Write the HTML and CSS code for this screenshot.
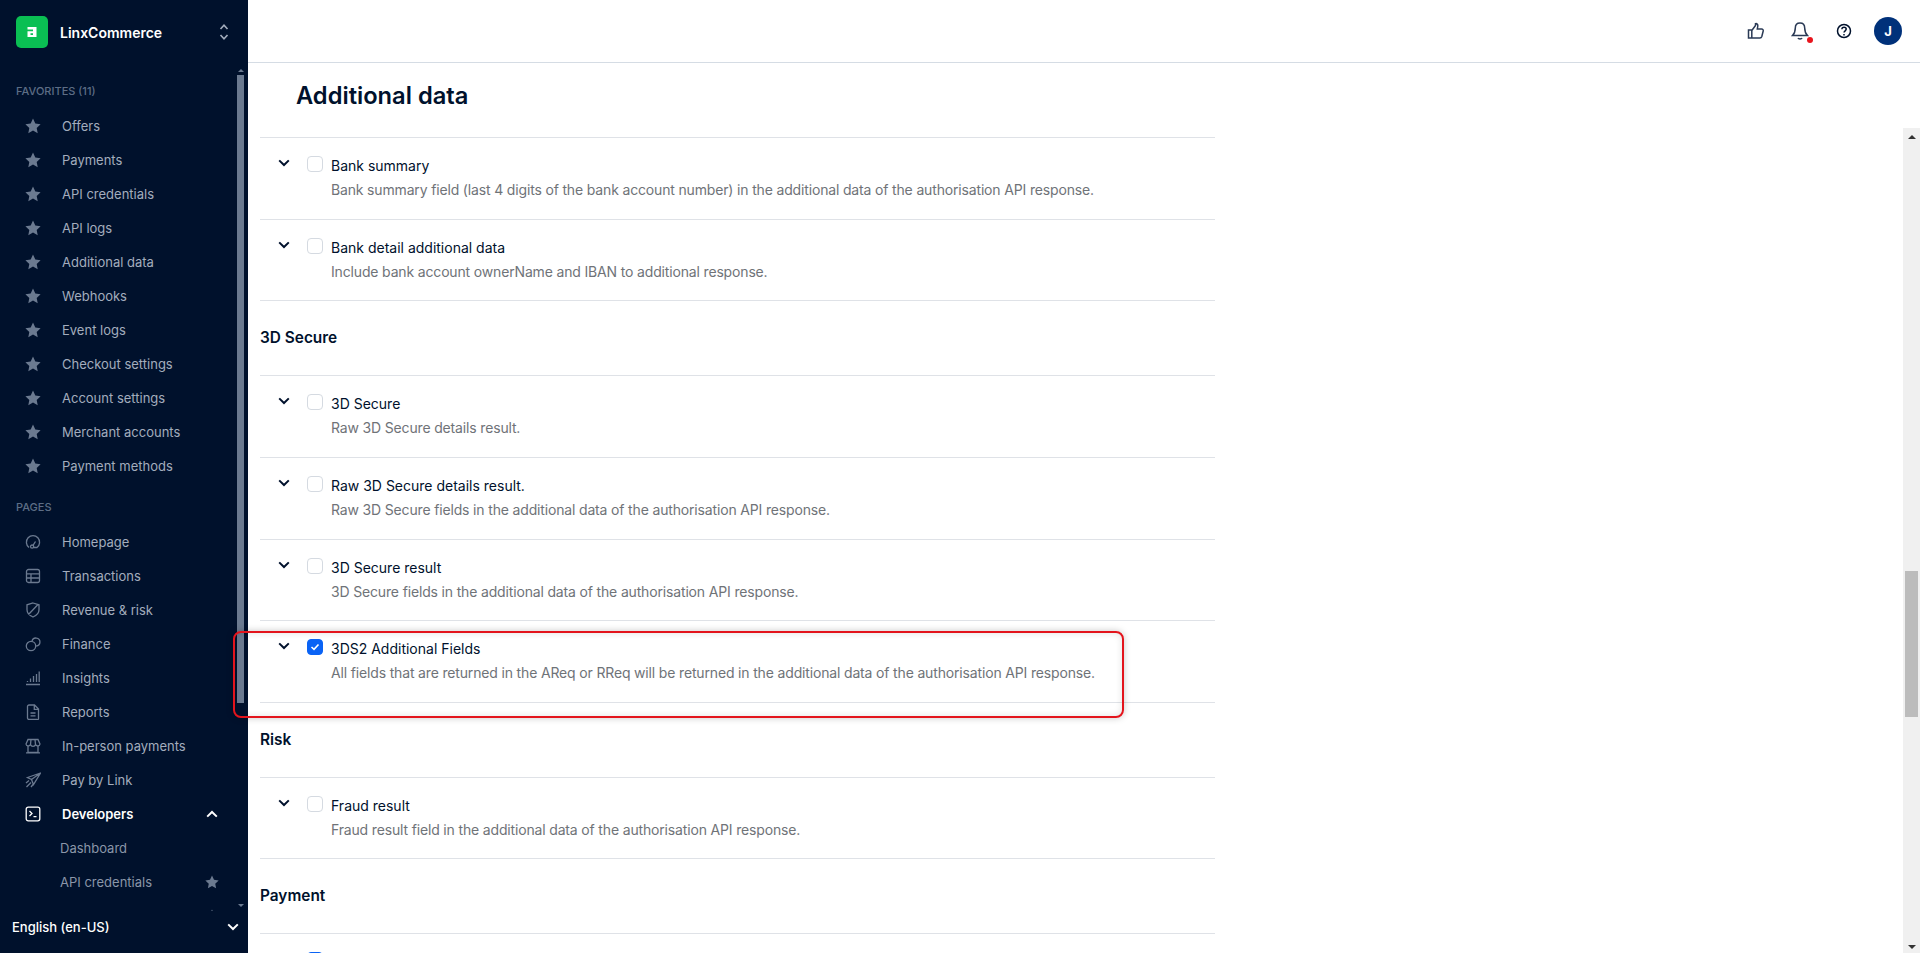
FILE: index.html
```html
<!DOCTYPE html>
<html lang="en">
<head>
<meta charset="utf-8">
<title>Additional data</title>
<link rel="stylesheet" href="styles.css">
</head>
<body>
<svg class="defs" width="0" height="0" aria-hidden="true">
  <symbol id="star" viewBox="0 0 16 16"><path d="M8 .6l2.3 4.9 5.3.7-3.9 3.7 1 5.3L8 12.6l-4.7 2.6 1-5.3L.4 6.2l5.3-.7z" fill="currentColor"/></symbol>
  <symbol id="chev" viewBox="0 0 12 8"><path d="M1.200 1.400L6 6l4.800-4.600" fill="none" stroke="currentColor" stroke-width="2"/></symbol>
</svg>
<div class="app">
  <aside class="sidebar">
    <div class="brand">
      <div class="logo"><svg width="12" height="12" viewBox="0 0 12 12"><path fill="#fff" fill-rule="evenodd" d="M1.500 1h9v10h-9V5.200h5.500V3.600H1.500zM4.500 7.200v1.800h2.500V7.200z"/></svg></div>
      <div class="brand-name">LinxCommerce</div>
      <svg class="updown" width="10" height="18" viewBox="0 0 10 18"><path d="M1.500 6L5 2.200 8.500 6M1.500 12L5 15.800 8.500 12" fill="none" stroke="currentColor" stroke-width="1.600"/></svg>
    </div>
    <div class="nav-wrap">
      <nav class="nav">
        <div class="nav-head nav-head-first">FAVORITES (11)</div>
        <div class="item"><svg class="ic"><use href="#star"/></svg>Offers</div>
        <div class="item"><svg class="ic"><use href="#star"/></svg>Payments</div>
        <div class="item"><svg class="ic"><use href="#star"/></svg>API credentials</div>
        <div class="item"><svg class="ic"><use href="#star"/></svg>API logs</div>
        <div class="item"><svg class="ic"><use href="#star"/></svg>Additional data</div>
        <div class="item"><svg class="ic"><use href="#star"/></svg>Webhooks</div>
        <div class="item"><svg class="ic"><use href="#star"/></svg>Event logs</div>
        <div class="item"><svg class="ic"><use href="#star"/></svg>Checkout settings</div>
        <div class="item"><svg class="ic"><use href="#star"/></svg>Account settings</div>
        <div class="item"><svg class="ic"><use href="#star"/></svg>Merchant accounts</div>
        <div class="item"><svg class="ic"><use href="#star"/></svg>Payment methods</div>
        <div class="nav-head">PAGES</div>
        <div class="item"><svg class="ic line" viewBox="0 0 16 16"><path d="M4 13.500A6.600 6.600 0 1 1 12 13.500H8.800M5.500 12.600a1.600 1.600 0 1 0 3.200 0 1.600 1.600 0 0 0-3.200 0zM8 11.300l2.500-3.800"/></svg>Homepage</div>
        <div class="item"><svg class="ic line" viewBox="0 0 16 16"><rect x="1.500" y="1.500" width="13" height="13" rx="2"/><path d="M1.500 5.800h13M1.500 10h13M6 5.800v8.700"/></svg>Transactions</div>
        <div class="item"><svg class="ic line" viewBox="0 0 16 16"><path d="M8 1l6 1.800v5c0 3.400-2.600 5.800-6 7.200-3.400-1.400-6-3.800-6-7.200v-5zM3.500 12.500L12.500 3"/></svg>Revenue &amp; risk</div>
        <div class="item"><svg class="ic line" viewBox="0 0 16 16"><circle cx="6" cy="10" r="4.700"/><path d="M7 5.300A4 4 0 1 1 11.200 10"/></svg>Finance</div>
        <div class="item"><svg class="ic line" viewBox="0 0 16 16"><path d="M1 14.500h14M2.500 12v-1M5.500 12V8.500M8.500 12V6M11.500 12V4M14.200 12V1.500"/></svg>Insights</div>
        <div class="item"><svg class="ic line" viewBox="0 0 16 16"><path d="M2.500 2.500a1.500 1.500 0 0 1 1.500-1.500h5.500l4 4v9.500a1 1 0 0 1-1.500 1H4a1.500 1.500 0 0 1-1.500-1.500zM9.300 1v4.300h4.200M5.500 9h5M5.500 11.800h5"/></svg>Reports</div>
        <div class="item"><svg class="ic line" viewBox="0 0 16 16"><path d="M3 1.500h10l2 4.500a2.300 2.300 0 0 1-4.400.6 2.800 2.800 0 0 1-5.200 0A2.300 2.300 0 0 1 1 6zM3 8.500v6h10v-6M1 14.800h14M6 1.500L5.500 6.500M10 1.500l.5 5"/></svg>In-person payments</div>
        <div class="item"><svg class="ic line" viewBox="0 0 16 16"><path d="M15.500 1L2.500 5.500l4 2 2 5zM15.500 1L6.500 7.500M1 11l3-2.500M1.500 15L6 10.500M6 15l2-2.500"/></svg>Pay by Link</div>
        <div class="item item-active"><svg class="ic line" viewBox="0 0 16 16"><rect x="1.200" y="1.200" width="13.600" height="13.600" rx="2"/><path d="M4.500 5l2.500 2.500-2.500 2.500M8.500 10.700h3"/></svg>Developers<svg class="chev-up" width="12" height="8"><use href="#chev"/></svg></div>
        <div class="item sub">Dashboard</div>
        <div class="item sub">API credentials<svg class="sub-star"><use href="#star"/></svg></div>
        <div class="item sub">API logs<svg class="sub-star"><use href="#star"/></svg></div>
      </nav>
      <div class="nav-scroll">
        <span class="tri-up"></span>
        <span class="nav-thumb"></span>
        <span class="nav-rest"></span>
        <span class="tri-down"></span>
      </div>
    </div>
    <div class="lang">English (en-US)<svg width="12" height="8"><use href="#chev"/></svg></div>
  </aside>
  <main class="main">
    <header class="topbar">
      <div class="tb-btn"><svg width="18" height="18" viewBox="0 0 18 18" fill="none" stroke="#2a3a55" stroke-width="1.500"><path d="M1.500 8h3.300v8H1.500zM4.800 8.500l3.700-5V1.700c1.600-.4 2.500 1 2.300 2.300L10.300 7h4.300c1.200 0 1.900 1 1.600 2l-1.400 5.500c-.3 1-1 1.500-1.900 1.500H4.800"/></svg></div>
      <div class="tb-btn"><svg width="18" height="20" viewBox="0 0 18 20" fill="none" stroke="#2a3a55" stroke-width="1.500"><path d="M9 2c-3 0-4.700 2.200-4.700 5 0 3.500-.8 5.500-2.800 7.600h15c-2-2.100-2.800-4.100-2.800-7.600C13.700 4.200 12 2 9 2zM7 17c.5 1.300 3.500 1.300 4 0"/></svg><span class="dot"></span></div>
      <div class="tb-btn"><svg width="18" height="18" viewBox="0 0 18 18" fill="none" stroke="#00112c" stroke-width="1.500"><circle cx="9" cy="9" r="6.500"/><path d="M6.900 7.300c0-3 4.300-2.700 4.300-.2 0 1.700-2.200 1.700-2.200 3.500"/><path d="M9 12v1.500"/></svg></div>
      <div class="avatar">J</div>
    </header>
    <div class="content">
      <div class="col">
        <h1 class="title">Additional data</h1>
        <div class="list-clip">
          <div class="list">
            <div class="row"><svg class="row-chev" width="12" height="8"><use href="#chev"/></svg><span class="box"></span><div><div class="label">Bank summary</div><div class="desc">Bank summary field (last 4 digits of the bank account number) in the additional data of the authorisation API response.</div></div></div>
            <div class="row"><svg class="row-chev" width="12" height="8"><use href="#chev"/></svg><span class="box"></span><div><div class="label">Bank detail additional data</div><div class="desc">Include bank account ownerName and IBAN to additional response.</div></div></div>
            <h2 class="section">3D Secure</h2>
            <div class="row"><svg class="row-chev" width="12" height="8"><use href="#chev"/></svg><span class="box"></span><div><div class="label">3D Secure</div><div class="desc">Raw 3D Secure details result.</div></div></div>
            <div class="row"><svg class="row-chev" width="12" height="8"><use href="#chev"/></svg><span class="box"></span><div><div class="label">Raw 3D Secure details result.</div><div class="desc">Raw 3D Secure fields in the additional data of the authorisation API response.</div></div></div>
            <div class="row"><svg class="row-chev" width="12" height="8"><use href="#chev"/></svg><span class="box"></span><div><div class="label">3D Secure result</div><div class="desc">3D Secure fields in the additional data of the authorisation API response.</div></div></div>
            <div class="row"><svg class="row-chev" width="12" height="8"><use href="#chev"/></svg><span class="box box-on"><svg width="10" height="8" viewBox="0 0 10 8"><path d="M1.500 4l2.500 2.300L8.500 1.500" fill="none" stroke="#fff" stroke-width="1.600"/></svg></span><div><div class="label">3DS2 Additional Fields</div><div class="desc">All fields that are returned in the AReq or RReq will be returned in the additional data of the authorisation API response.</div></div></div>
            <h2 class="section">Risk</h2>
            <div class="row"><svg class="row-chev" width="12" height="8"><use href="#chev"/></svg><span class="box"></span><div><div class="label">Fraud result</div><div class="desc">Fraud result field in the additional data of the authorisation API response.</div></div></div>
            <h2 class="section">Payment</h2>
            <div class="row"><svg class="row-chev" width="12" height="8"><use href="#chev"/></svg><span class="box box-on"></span></div>
          </div>
        </div>
      </div>
      <div class="page-scroll">
        <span class="tri-up dark"></span>
        <span class="spacer-a"></span>
        <span class="page-thumb"></span>
        <span class="spacer-b"></span>
        <span class="tri-down dark"></span>
      </div>
    </div>
  </main>
</div>
<div class="callout"></div>
</body>
</html>
```

FILE: styles.css
```css
* { box-sizing: border-box; }
html, body { margin: 0; height: 953px; overflow: hidden; }
body { font-family: Inter, "Liberation Sans", sans-serif; font-size: 13px; color: #00112c; background: #fff; }
.defs { position: absolute; }
.app { display: flex; height: 953px; }

.sidebar { width: 248px; flex: none; background: #00112c; display: flex; flex-direction: column; color: #a3adbd; }
.brand { height: 64px; flex: none; display: flex; align-items: center; padding-left: 16px; }
.logo { width: 32px; height: 32px; border-radius: 5px; background: #0abf53; display: flex; align-items: center; justify-content: center; }
.brand-name { margin-left: 12px; color: #fff; font-weight: 600; font-size: 14px; width: 159px; white-space: nowrap; }
.updown { color: #a3adbd; }
.nav-wrap { flex: 1; min-height: 0; display: flex; overflow: hidden; }
.nav { width: 237px; flex: none; overflow: hidden; }
.nav-head { font-size: 11px; font-weight: 500; color: #5d6d85; height: 25px; padding: 0 0 0 16px; line-height: 14px; margin-top: 17px; }
.nav-head-first { margin-top: 20px; }
.item { height: 34px; display: flex; align-items: center; padding-left: 25px; color: #a3adbd; white-space: nowrap; position: relative; }
.ic { width: 16px; height: 16px; color: #6b7a90; margin-right: 21px; flex: none; }
.line { fill: none; stroke: #6b7a90; stroke-width: 1.300; }
.item-active { color: #fff; font-weight: 600; }
.item-active .line { stroke: #fff; }
.chev-up { color: #fff; transform: rotate(180deg); margin-left: auto; margin-right: 19px; }
.sub { padding-left: 60px; color: #8a96a8; }
.sub-star { width: 14px; height: 14px; color: #6b7a90; margin-left: auto; margin-right: 18px; }
.nav-scroll { width: 7px; flex: none; display: flex; flex-direction: column; align-items: center; padding-top: 5px; padding-bottom: 4px; }
.nav-thumb { width: 7px; height: 628px; background: #6b7a90; margin-top: 3px; flex: none; }
.nav-rest { flex: 1; }
.tri-up, .tri-down { display: block; width: 0; height: 0; border-left: 3px solid transparent; border-right: 3px solid transparent; flex: none; }
.tri-up { border-bottom: 3px solid #6b7a90; }
.tri-down { border-top: 3px solid #6b7a90; }
.lang { height: 42px; flex: none; display: flex; align-items: center; justify-content: space-between; padding: 0 9px 10px 12px; color: #fff; font-weight: 500; }

.main { flex: 1; min-width: 0; display: flex; flex-direction: column; }
.topbar { height: 63px; flex: none; border-bottom: 1px solid #d5dce4; display: flex; justify-content: flex-end; align-items: center; padding-right: 18px; }
.tb-btn { width: 44px; height: 44px; display: flex; align-items: center; justify-content: center; position: relative; }
.dot { position: absolute; left: 29px; top: 28px; width: 6px; height: 6px; border-radius: 50%; background: #e8141c; }
.avatar { width: 28px; height: 28px; border-radius: 50%; background: #00317a; color: #fff; font-weight: 700; font-size: 13px; display: flex; align-items: center; justify-content: center; margin-left: 8px; }

.content { flex: 1; min-height: 0; display: flex; }
.col { flex: 1; min-width: 0; display: flex; flex-direction: column; }
.title { margin: 0; height: 74px; flex: none; padding-left: 48px; font-size: 23.700px; font-weight: 600; line-height: 65px; color: #00112c; }
.list-clip { flex: 1; min-height: 0; overflow: hidden; padding-left: 12px; }
.list { width: 955px; border-top: 1px solid #dfe2e7; }
.row { height: 81.700px; border-bottom: 1px solid #dfe2e7; display: flex; padding: 18px 0 0 18px; }
.row-chev { margin: 3px 12px 0 0; flex: none; color: #00112c; }
.box { width: 16px; height: 16px; flex: none; border: 1px solid #d5dae1; border-radius: 4px; margin: 0 8px 0 5px; display: flex; align-items: center; justify-content: center; background: #fff; }
.box-on { background: #0a63f5; border-color: #0a63f5; }
.label { font-size: 14px; line-height: 20px; color: #00112c; }
.desc { font-size: 14px; letter-spacing: -.16px; line-height: 20px; margin-top: 4px; color: #6f7378; white-space: nowrap; }
.section { margin: 0; height: 74.800px; border-bottom: 1px solid #dfe2e7; font-size: 15.400px; font-weight: 600; line-height: 74px; color: #00112c; }

.page-scroll { width: 17px; flex: none; margin-top: 65px; background: #f0f0f0; display: flex; flex-direction: column; align-items: center; padding: 7px 0 4px; }
.spacer-a { height: 432px; flex: none; }
.page-thumb { width: 13px; height: 146px; background: #bcbcbc; flex: none; }
.spacer-b { flex: 1; }
.tri-up.dark, .tri-down.dark { border-left-width: 4px; border-right-width: 4px; }
.tri-up.dark { border-bottom: 4px solid #333; }
.tri-down.dark { border-top: 4px solid #333; }

.callout { position: absolute; left: 233px; top: 631px; width: 891px; height: 87px; border: 2px solid #e3141c; border-radius: 8px; box-shadow: 0 0 7px rgba(0,0,0,.22), inset 0 0 7px rgba(0,0,0,.12); }
```
